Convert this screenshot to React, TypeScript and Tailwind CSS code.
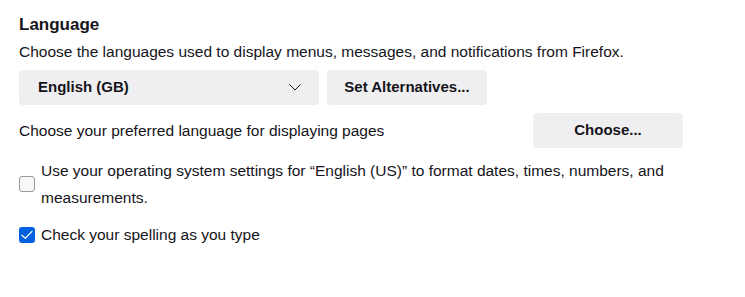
import React, { useState } from 'react';

const Checkbox: React.FC<{ checked: boolean; onToggle: () => void }> = ({ checked, onToggle }) => (
  <button
    type="button"
    onClick={onToggle}
    className={
      checked
        ? 'w-4 h-4 shrink-0 rounded-[3px] bg-[#0061e0] flex items-center justify-center'
        : 'w-4 h-4 shrink-0 rounded-[3px] border border-[#9a9aa2] bg-[#f7f7f8]'
    }
  >
    {checked && (
      <svg width="12" height="10" viewBox="0 0 12 10" fill="none">
        <path d="M1 5.2 L4.3 8.4 L11 1.4" stroke="white" strokeWidth="1.3" strokeLinecap="round" strokeLinejoin="round" />
      </svg>
    )}
  </button>
);

export default function App() {
  const [useOs, setUseOs] = useState(false);
  const [spell, setSpell] = useState(true);

  return (
    <div className="w-[745px] h-[297px] bg-white text-[#15141a] px-[19px] pt-[14px] font-['Liberation_Sans',Arial,sans-serif]">
      <h2 className="text-[17px] leading-[22px] font-bold">Language</h2>
      <p className="mt-[6px] text-[15.5px] leading-[20px]">
        Choose the languages used to display menus, messages, and notifications from Firefox.
      </p>

      <div className="mt-2 flex gap-2">
        <button className="w-[300px] h-[35px] rounded-[4px] bg-[#efeff1] flex items-center justify-between pl-[19px] pr-[18px] text-[15px] font-bold">
          <span>English (GB)</span>
          <svg width="12" height="7" viewBox="0 0 12 7" fill="none">
            <path d="M0.7 0.7 L6 6 L11.3 0.7" stroke="#15141a" strokeWidth="1" strokeLinecap="round" strokeLinejoin="round" />
          </svg>
        </button>
        <button className="w-[160px] h-[35px] rounded-[4px] bg-[#efeff1] text-[15px] font-bold">
          Set Alternatives...
        </button>
      </div>

      <div className="mt-2 flex items-center">
        <p className="w-[514px] text-[15.5px] leading-[20px]">Choose your preferred language for displaying pages</p>
        <button className="w-[150px] h-[35px] rounded-[4px] bg-[#efeff1] text-[15px] font-bold">Choose...</button>
      </div>

      <div className="mt-[9px] flex items-center gap-[6px]">
        <Checkbox checked={useOs} onToggle={() => setUseOs(!useOs)} />
        <p className="text-[15.5px] leading-[27px]">
          Use your operating system settings for “English (US)” to format dates, times, numbers, and
          <br />
          measurements.
        </p>
      </div>

      <div className="mt-[10px] flex items-center gap-[6px]">
        <Checkbox checked={spell} onToggle={() => setSpell(!spell)} />
        <p className="text-[15.5px] leading-[27px]">Check your spelling as you type</p>
      </div>
    </div>
  );
}
